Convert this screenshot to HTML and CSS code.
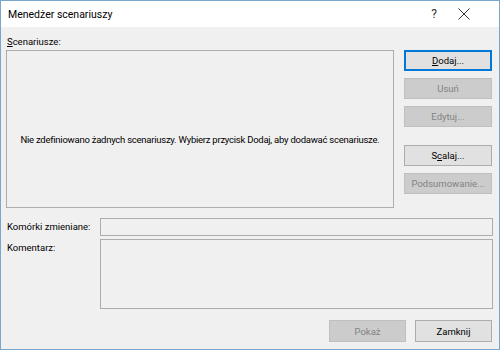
FILE: index.html
```html
<!DOCTYPE html>
<html lang="pl">
<head>
<meta charset="utf-8">
<link rel="stylesheet" href="styles.css">
</head>
<body>
<div class="window">
  <div class="titlebar">
    <span class="title">Menedżer scenariuszy</span>
    <span class="help">?</span>
    <span class="close"><svg width="12" height="12" viewBox="0 0 12 12"><path d="M0.5 0.5 L11.5 11.5 M11.5 0.5 L0.5 11.5" stroke="#333" stroke-width="1" fill="none"/></svg></span>
  </div>
  <div class="content">
    <div class="label-top"><u>S</u>cenariusze:</div>
    <div class="main">
      <div class="listbox"><span class="empty">Nie zdefiniowano żadnych scenariuszy. Wybierz przycisk Dodaj, aby dodawać scenariusze.</span></div>
      <div class="side">
        <button class="btn focus"><u>D</u>odaj...</button>
        <button class="btn disabled">Usuń</button>
        <button class="btn disabled">Edytuj...</button>
        <button class="btn gap">S<u>c</u>alaj...</button>
        <button class="btn disabled">Podsumowanie...</button>
      </div>
    </div>
    <div class="fields">
      <div class="flabel">Komórki zmieniane:</div>
      <div class="input"></div>
      <div class="flabel">Komentarz:</div>
      <div class="textarea"></div>
    </div>
    <div class="footer">
      <button class="btn disabled wide">Pokaż</button>
      <button class="btn wide">Zamknij</button>
    </div>
  </div>
</div>
</body>
</html>
```
FILE: styles.css
```css
* { box-sizing: border-box; }
body { margin: 0; font-family: Roboto, "Noto Sans", sans-serif; font-size: 9.5px; color: #000; }
.window { width: 500px; height: 350px; border: 1px solid #7ba6cc; background: #f0f0f0; display: flex; flex-direction: column; overflow: hidden; }
.titlebar { flex: none; height: 26px; background: #fff; display: flex; align-items: center; padding-left: 7px; }
.title { font-size: 10.5px; flex: 1; color: #000; }
.help { font-size: 12px; color: #333; width: 24px; margin-right: 12px; text-align: center; }
.close { width: 14px; margin-right: 27px; display: flex; align-items: center; }
.content { padding: 8px 7px 0 5px; flex: 1; display: flex; flex-direction: column; }
.label-top { flex: none; height: 15px; line-height: 14px; padding-left: 1px; }
.main { flex: none; display: flex; gap: 10px; height: 158px; }
.listbox { width: 388px; height: 158px; border: 1px solid #adadad; display: flex; align-items: center; justify-content: center; text-align: center; padding-top: 20px; }
.empty { white-space: nowrap; letter-spacing: -0.25px; }
.side { display: flex; flex-direction: column; gap: 7px; width: 88px; }
.btn { flex: none; font-family: inherit; font-size: 9.5px; height: 21px; width: 88px; background: #e1e1e1; border: 1px solid #adadad; padding: 0; color: #000; }
.btn.disabled { background: #cccccc; border-color: #bfbfbf; color: #838383; }
.btn.focus { border: 2px solid #0078d7; box-shadow: inset 0 0 0 1px #e1e1e1; }
.btn.gap { margin-top: 11px; }
.fields { flex: none; display: grid; grid-template-columns: 94px 1fr; row-gap: 3px; margin-top: 10px; margin-right: -1px; }
.flabel { line-height: 18px; padding-left: 1px; white-space: nowrap; }
.input { height: 18px; border: 1px solid #adadad; }
.textarea { height: 70px; border: 1px solid #adadad; }
.footer { flex: none; display: flex; justify-content: flex-end; gap: 9px; margin-top: 11px; }
.btn.wide { width: 77px; height: 22px; }
```
